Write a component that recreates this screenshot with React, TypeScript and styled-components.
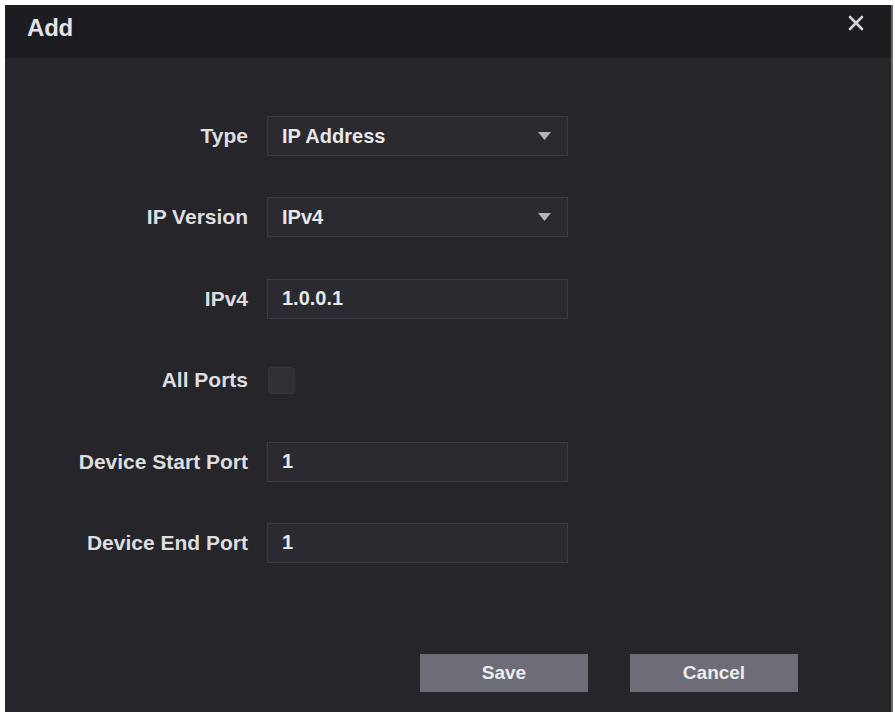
import { FC } from 'react'
import styled, { createGlobalStyle } from 'styled-components'

const GlobalStyle = createGlobalStyle`
  html, body {
    margin: 0;
    padding: 0;
    background: #ffffff;
  }
  body {
    font-family: "Liberation Sans", Arial, sans-serif;
  }
`

const Page = styled.div(() => `
  padding: 5px 0 0 5px;
  height: 712px;
  box-sizing: border-box;
  overflow: hidden;
`)

const Dialog = styled.div(() => `
  width: 888px;
  height: 707px;
  display: flex;
  flex-direction: column;
  background: #25252a;
  border-right: 2px solid #6a6a6e;
  box-sizing: border-box;
`)

const Header = styled.div(() => `
  height: 53px;
  flex: none;
  display: flex;
  align-items: center;
  justify-content: space-between;
  padding: 0 25px 8px 22px;
  background: #1d1d21;
  box-sizing: border-box;
`)

const Title = styled.div(() => `
  color: #e4e4e6;
  font-size: 24px;
  font-weight: bold;
  letter-spacing: -0.2px;
`)

const Close = styled.button(() => `
  align-self: flex-start;
  margin-top: 8px;
  width: 20px;
  height: 20px;
  padding: 0;
  border: none;
  background: none;
  display: flex;
  align-items: center;
  justify-content: center;
  cursor: pointer;
`)

const Form = styled.div(() => `
  display: grid;
  grid-template-columns: 243px 301px;
  grid-auto-rows: 40px;
  column-gap: 19px;
  row-gap: 41.4px;
  padding-top: 58px;
`)

const Label = styled.div(() => `
  display: flex;
  align-items: center;
  justify-content: flex-end;
  color: #dedee0;
  font-size: 21px;
  font-weight: bold;
`)

const Field = styled.div<{ $select?: boolean }>((props) => `
  display: flex;
  align-items: center;
  justify-content: space-between;
  padding: 0 ${props.$select ? '16px' : '14px'} 0 14px;
  background: #2a2a30;
  border: 1px solid #3b3b41;
  box-sizing: border-box;
  color: #e8e8ea;
  font-size: 20px;
  font-weight: bold;
`)

const CheckCell = styled.div(() => `
  display: flex;
  align-items: center;
`)

const Checkbox = styled.div(() => `
  width: 27px;
  height: 27px;
  margin-left: 1px;
  border-radius: 3px;
  background: #303036;
  border: 1px solid #36363c;
  box-sizing: border-box;
`)

const Footer = styled.div(() => `
  display: flex;
  justify-content: flex-end;
  gap: 42px;
  padding: 91px 93px 0 0;
`)

const Button = styled.button(() => `
  width: 168px;
  height: 38px;
  border: none;
  border-radius: 0;
  background: #6e6d77;
  color: #ececee;
  font-family: "Liberation Sans", Arial, sans-serif;
  font-size: 19px;
  font-weight: bold;
  cursor: pointer;
`)

const Caret: FC = () => (
  <svg width="13" height="8" viewBox="0 0 13 8">
    <path d="M0 0 H13 L6.5 8 Z" fill="#b4b4b8" />
  </svg>
)

const App: FC = () => (
  <Page>
    <GlobalStyle />
    <Dialog>
      <Header>
        <Title>Add</Title>
        <Close aria-label="close">
          <svg width="16" height="16" viewBox="0 0 16 16">
            <path d="M2 2 L14 14 M14 2 L2 14" stroke="#d4d4d6" strokeWidth="2.6" strokeLinecap="round" />
          </svg>
        </Close>
      </Header>
      <Form>
        <Label>Type</Label>
        <Field $select>
          <span>IP Address</span>
          <Caret />
        </Field>

        <Label>IP Version</Label>
        <Field $select>
          <span>IPv4</span>
          <Caret />
        </Field>

        <Label>IPv4</Label>
        <Field>1.0.0.1</Field>

        <Label>All Ports</Label>
        <CheckCell>
          <Checkbox />
        </CheckCell>

        <Label>Device Start Port</Label>
        <Field>1</Field>

        <Label>Device End Port</Label>
        <Field>1</Field>
      </Form>
      <Footer>
        <Button>Save</Button>
        <Button>Cancel</Button>
      </Footer>
    </Dialog>
  </Page>
)

export default App
